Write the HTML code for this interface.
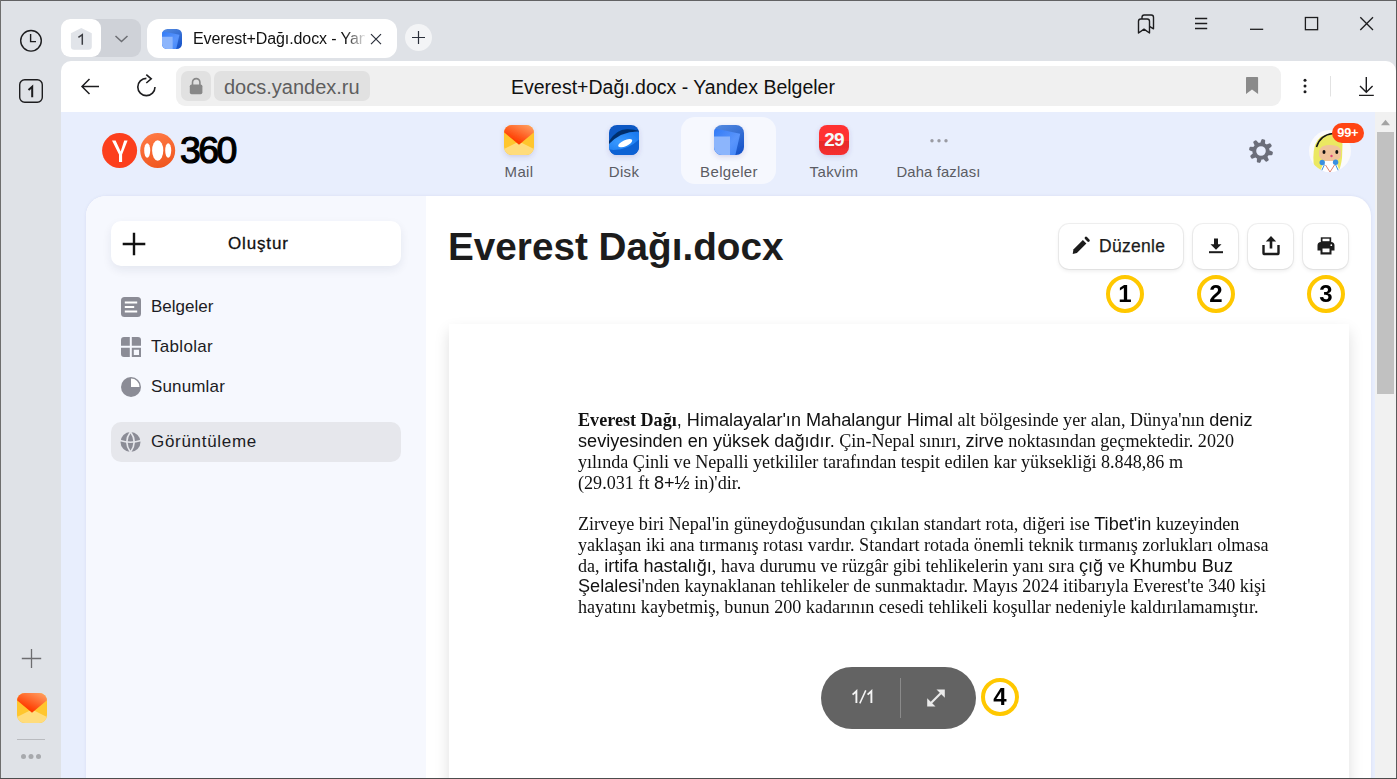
<!DOCTYPE html>
<html><head><meta charset="utf-8">
<style>
*{margin:0;padding:0;box-sizing:border-box}
html,body{width:1397px;height:779px;overflow:hidden;background:#dfe2e7;font-family:"Liberation Sans",sans-serif}
.a{position:absolute}
svg{position:absolute;overflow:visible}
.nw{white-space:nowrap}
</style></head><body>
<!-- left browser sidebar icons -->
<svg style="left:0;top:0" width="62" height="779">
  <circle cx="31" cy="40.8" r="10.3" fill="none" stroke="#1d1d1f" stroke-width="1.4"/>
  <path d="M30.6 34V41.6H36" fill="none" stroke="#1d1d1f" stroke-width="1.4"/>
  <rect x="19.7" y="79.7" width="22.6" height="22.6" rx="5" fill="none" stroke="#1d1d1f" stroke-width="1.4"/>
  <path d="M21.8 658.5H41.2M31.5 649V668" stroke="#6d6d70" stroke-width="1.3"/>
  <path d="M17 739.5H45" stroke="#b9bbbf" stroke-width="1"/>
  <circle cx="23.5" cy="756.5" r="2.5" fill="#a7a9ad"/><circle cx="31" cy="756.5" r="2.5" fill="#a7a9ad"/><circle cx="38.5" cy="756.5" r="2.5" fill="#a7a9ad"/>
</svg>
<svg style="left:0;top:0" width="62" height="120"><path d="M28.5 89.9L32.2 86.7V97.2" fill="none" stroke="#1d1d1f" stroke-width="2"/></svg>


<!-- tabs -->
<div class="a" style="left:61px;top:19px;width:80px;height:38px;border-radius:9px;background:#cfd2d8"></div>
<div class="a" style="left:61px;top:19px;width:40px;height:38px;border-radius:9px;background:#fff"></div>
<svg style="left:0;top:0" width="450" height="60">
  <path d="M81.3 28L91.8 33.2V46.5Q91.8 49.8 88.5 49.8H74.2Q70.9 49.8 70.9 46.5V33.2Z" fill="#e1e4e9"/>
  <path d="M115.5 36L121.5 41.5L127.5 36" fill="none" stroke="#6c6e73" stroke-width="1.5"/>
  <circle cx="418.5" cy="37.5" r="13.5" fill="#f3f4f6"/>
  <path d="M412 37.5H425M418.5 31V44" stroke="#2a2f3a" stroke-width="1.2"/>
</svg>
<svg style="left:0;top:0" width="100" height="60"><path d="M78.4 37.4L82.3 34.6V44.8" fill="none" stroke="#3b3d42" stroke-width="1.5"/></svg>
<div class="a" style="left:147px;top:19px;width:250px;height:39px;border-radius:12px;background:#fff"></div>
<svg style="left:162px;top:29px" width="20" height="20" viewBox="0 0 30 30">
  <defs>
    <linearGradient id="dbk" x1="0.3" y1="0" x2="0.9" y2="1"><stop offset="0" stop-color="#4f86de"/><stop offset="1" stop-color="#1350c8"/></linearGradient>
    <linearGradient id="dmid" x1="0" y1="0" x2="1" y2="1"><stop offset="0" stop-color="#2f78f5"/><stop offset="0.6" stop-color="#5a95fc"/><stop offset="1" stop-color="#3f84f7"/></linearGradient>
    <clipPath id="dcl"><rect width="30" height="30" rx="8"/></clipPath>
  </defs>
  <g clip-path="url(#dcl)">
    <rect width="30" height="30" fill="url(#dbk)"/>
    <path d="M-1 3L26.2 8.7L21.1 31H-1Z" fill="url(#dmid)"/>
    <path d="M-1 11.5H16V31H-1Z" fill="#8cb5fc"/>
  </g>
</svg>
<div class="a nw" style="left:193px;top:28px;width:172px;height:22px;font-size:16px;line-height:22px;color:#111;overflow:hidden;letter-spacing:-0.1px;-webkit-mask-image:linear-gradient(90deg,#000 0,#000 152px,transparent 174px)">Everest+Dağı.docx - Yandex Belgeler</div>

<svg style="left:0;top:0" width="450" height="60"><path d="M371 34.2L381 44.2M381 34.2L371 44.2" stroke="#2a2f3a" stroke-width="1.2"/></svg>
<!-- window controls -->
<svg style="left:0;top:0" width="1397" height="60">
  <path d="M1138.5 33V21.2Q1138.5 19 1140.7 19H1147.3Q1149.5 19 1149.5 21.2V33L1144 29.2L1138.5 33Z" fill="none" stroke="#1d1d1f" stroke-width="1.4" stroke-linejoin="round"/>
  <path d="M1142 19V17.2Q1142 15 1144.2 15H1151.3Q1153.5 15 1153.5 17.2V28.8L1149.5 26.3" fill="none" stroke="#1d1d1f" stroke-width="1.4" stroke-linejoin="round"/>
  <path d="M1195 18.5H1207.2M1195 23.5H1207.2M1195 28.5H1207.2" stroke="#1d1d1f" stroke-width="1.3"/>
  <path d="M1250 29.3H1263.2" stroke="#1d1d1f" stroke-width="1.3"/>
  <rect x="1305.4" y="17.5" width="12.2" height="12.2" fill="none" stroke="#1d1d1f" stroke-width="1.3"/>
  <path d="M1360.3 17.3L1373 30M1373 17.3L1360.3 30" stroke="#1d1d1f" stroke-width="1.3"/>
</svg>

<!-- toolbar -->
<div class="a" style="left:61px;top:61px;width:1335px;height:60px;border-radius:10px 10px 0 0;background:#fff"></div>
<svg style="left:0;top:60px" width="1397" height="52">
  <path d="M82.5 26.5H99M89.5 19L82 26.5L89.5 34" fill="none" stroke="#1d1d1f" stroke-width="1.5"/>
  <path d="M155 27A8.6 8.6 0 1 1 146.4 18.4" fill="none" stroke="#1d1d1f" stroke-width="1.6"/>
  <path d="M146.3 14.6L151.2 18.8L146.3 23" fill="none" stroke="#1d1d1f" stroke-width="1.6"/>
</svg>
<div class="a" style="left:176px;top:66px;width:1105px;height:40px;border-radius:9px;background:#f0f0f0"></div>
<div class="a" style="left:181px;top:71px;width:30px;height:30px;border-radius:7px;background:#e1e1e1"></div>
<div class="a" style="left:214px;top:71px;width:156px;height:30px;border-radius:7px;background:#e1e1e1"></div>
<svg style="left:0;top:60px" width="1397" height="52">
  <path d="M192.5 25V22.3A3.7 3.7 0 0 1 199.9 22.3V25" fill="none" stroke="#888" stroke-width="1.6"/>
  <rect x="189.8" y="24.5" width="12.6" height="9.8" rx="1.8" fill="#888"/>
  <path d="M1246 17.8Q1246 17 1246.8 17H1257.3Q1258.1 17 1258.1 17.8V34L1252 29.5L1246 34Z" fill="#8a8a8a"/>
  <circle cx="1305" cy="20.3" r="1.5" fill="#1d1d1f"/><circle cx="1305" cy="26" r="1.5" fill="#1d1d1f"/><circle cx="1305" cy="31.7" r="1.5" fill="#1d1d1f"/>
  <path d="M1330.5 16V36.5" stroke="#e2e2e2" stroke-width="1"/>
  <path d="M1366.3 17V32M1360 26L1366.3 32.3L1372.6 26M1359 35.4H1373.8" fill="none" stroke="#1d1d1f" stroke-width="1.4"/>
</svg>
<div class="a nw" style="left:224px;top:75px;font-size:20px;line-height:24px;color:#5e5e5e">docs.yandex.ru</div>
<div class="a nw" style="left:511px;top:75px;font-size:19.5px;line-height:24px;color:#111">Everest+Dağı.docx - Yandex Belgeler</div>


<!-- page -->
<div class="a" style="left:61px;top:112px;width:1314px;height:666px;background:#e8eefd"></div>
<!-- scrollbar -->
<div class="a" style="left:1375px;top:112px;width:21px;height:666px;background:#f1f1f1"></div>
<div class="a" style="left:1377px;top:132px;width:17px;height:262px;background:#c1c1c1"></div>
<svg style="left:0;top:0" width="1397" height="140"><path d="M1381 125.2L1385.5 119.8L1390 125.2Z" fill="#a3a3a3"/></svg>

<!-- 360 header -->
<svg style="left:102px;top:133px" width="75" height="36" viewBox="0 0 75 36">
  <defs><linearGradient id="og" x1="0.3" y1="0" x2="0.6" y2="1"><stop offset="0" stop-color="#ff7a45"/><stop offset="1" stop-color="#f0561e"/></linearGradient></defs>
  <circle cx="17.6" cy="17.5" r="17.5" fill="#fc3f1d"/>
  <path d="M10 7.6H13.6L18.7 18.4L22.2 7.6H25.6L20.1 21.6V29H17V21.6Z" fill="#fff"/>
  <circle cx="55.7" cy="17.5" r="17.5" fill="url(#og)"/>
  <ellipse cx="55.7" cy="17.5" rx="5.6" ry="10.2" fill="#fff"/>
  <ellipse cx="45.2" cy="17.5" rx="3" ry="7.3" fill="#fff"/>
  <ellipse cx="66.2" cy="17.5" rx="3" ry="7.3" fill="#fff"/>
</svg>
<div class="a nw" style="left:180px;top:127px;font-size:37.5px;font-weight:normal;line-height:46px;letter-spacing:-2.6px;color:#000;-webkit-text-stroke:1.2px #000">360</div>

<!-- services -->
<div class="a" style="left:681px;top:117px;width:95px;height:67px;border-radius:14px;background:#f6f8fe"></div>
<svg style="left:0;top:0" width="1397" height="200">
  <defs>
    <linearGradient id="mailtop" x1="0.3" y1="0.75" x2="0.85" y2="0"><stop offset="0" stop-color="#ff3c00"/><stop offset="1" stop-color="#ffa366"/></linearGradient>
    <linearGradient id="diskg" x1="0" y1="0" x2="0" y2="1"><stop offset="0" stop-color="#0a4fb8"/><stop offset="1" stop-color="#1f74e8"/></linearGradient>
    <linearGradient id="docg" x1="0" y1="0" x2="1" y2="1"><stop offset="0" stop-color="#3585f8"/><stop offset="1" stop-color="#1b58d4"/></linearGradient>
    <linearGradient id="calg" x1="0" y1="0" x2="0" y2="1"><stop offset="0" stop-color="#ff3333"/><stop offset="0.54" stop-color="#ff3131"/><stop offset="0.54" stop-color="#e62a2a"/><stop offset="0.74" stop-color="#ec2c2c"/><stop offset="1" stop-color="#f73030"/></linearGradient>
    <filter id="ish" x="-50%" y="-50%" width="200%" height="200%"><feDropShadow dx="0" dy="2" stdDeviation="2.5" flood-color="#4a3a8a" flood-opacity="0.18"/></filter>
  </defs>
  <g transform="translate(504,125)" filter="url(#ish)">
    <defs><clipPath id="mcl"><rect width="30" height="30" rx="8"/></clipPath></defs>
    <g clip-path="url(#mcl)">
    <rect width="30" height="30" fill="#ffc62e"/>
    <path d="M-1 24.5L15 16.5L31 24.5V31H-1Z" fill="#ffdc7c"/>
    <path d="M-1 6.5L15 19.8L31 6.5V-1H-1Z" fill="url(#mailtop)"/>
    </g>
  </g>
  <g transform="translate(609,125)" filter="url(#ish)">
    <defs><clipPath id="dkc"><rect width="30" height="30" rx="8"/></clipPath>
    <radialGradient id="dkb" cx="0.35" cy="0.55" r="0.7"><stop offset="0" stop-color="#3a9aff"/><stop offset="1" stop-color="#1a7af0"/></radialGradient></defs>
    <g clip-path="url(#dkc)">
    <rect width="30" height="30" fill="#0758c4"/>
    <path d="M-1 31V24Q14 27 31 13V31Z" fill="#0a62d4"/>
    <path d="M-1 18Q7 3.5 19 4.2Q25 4.6 31 6V12Q12 7 -1 21Z" fill="#022f6c"/>
    <path d="M-1 20Q12 5.5 31 6.5V13.5Q18 27 -1 24.5Z" fill="url(#dkb)"/>
    <ellipse cx="16.2" cy="18.2" rx="7.6" ry="3" transform="rotate(-24 16.2 18.2)" fill="#fff"/>
    </g>
  </g>
  <g transform="translate(714,125)" filter="url(#ish)">
    <g clip-path="url(#dcl)">
    <rect width="30" height="30" fill="url(#dbk)"/>
    <path d="M-1 3L26.2 8.7L21.1 31H-1Z" fill="url(#dmid)"/>
    <path d="M-1 11.5H16V31H-1Z" fill="#8cb5fc"/>
    </g>
  </g>
  <g transform="translate(819,125)" filter="url(#ish)">
    <rect width="30" height="30" rx="8" fill="url(#calg)"/>
  </g>
  <circle cx="932" cy="140.7" r="1.7" fill="#9a9ba3"/><circle cx="939" cy="140.7" r="1.7" fill="#9a9ba3"/><circle cx="946" cy="140.7" r="1.7" fill="#9a9ba3"/>
</svg>
<div class="a nw" style="left:819px;top:127.5px;width:30px;text-align:center;font-size:19px;font-weight:bold;line-height:24px;color:#f4fbfa;letter-spacing:-0.8px">29</div>
<div class="a nw" style="left:469px;top:161px;width:100px;text-align:center;font-size:15px;line-height:22px;color:#5b5c63;letter-spacing:0.35px">Mail</div>
<div class="a nw" style="left:574px;top:161px;width:100px;text-align:center;font-size:15px;line-height:22px;color:#5b5c63;letter-spacing:0.35px">Disk</div>
<div class="a nw" style="left:679px;top:161px;width:100px;text-align:center;font-size:15px;line-height:22px;color:#5b5c63;letter-spacing:0.35px">Belgeler</div>
<div class="a nw" style="left:784px;top:161px;width:100px;text-align:center;font-size:15px;line-height:22px;color:#5b5c63;letter-spacing:0.35px">Takvim</div>
<div class="a nw" style="left:878px;top:161px;width:121px;text-align:center;font-size:14.8px;line-height:22px;color:#5b5c63;letter-spacing:0.15px">Daha fazlası</div>

<!-- gear + avatar -->
<svg style="left:1248px;top:138px" width="26" height="26" viewBox="0 0 26 26"><path fill="#6b6e7a" stroke="#6b6e7a" stroke-width="2.4" stroke-linejoin="round" fill-rule="evenodd" d="M13.26 5.60L14.50 2.31L15.98 2.62L15.77 6.14A7.40 7.40 0 0 1 18.41 7.95L21.63 6.50L22.45 7.76L19.81 10.11A7.40 7.40 0 0 1 20.40 13.26L23.69 14.50L23.38 15.98L19.86 15.77A7.40 7.40 0 0 1 18.05 18.41L19.50 21.63L18.24 22.45L15.89 19.81A7.40 7.40 0 0 1 12.74 20.40L11.50 23.69L10.02 23.38L10.23 19.86A7.40 7.40 0 0 1 7.59 18.05L4.37 19.50L3.55 18.24L6.19 15.89A7.40 7.40 0 0 1 5.60 12.74L2.31 11.50L2.62 10.02L6.14 10.23A7.40 7.40 0 0 1 7.95 7.59L6.50 4.37L7.76 3.55L10.11 6.19A7.40 7.40 0 0 1 13.26 5.60ZM13.00 7.00a6 6 0 1 0 0 12a6 6 0 1 0 0-12Z"/></svg>
<svg style="left:1309px;top:130px" width="42" height="42" viewBox="0 0 42 42">
  <defs><clipPath id="avc"><circle cx="21" cy="21" r="21"/></clipPath></defs>
  <circle cx="21" cy="21" r="21" fill="#fafafc"/>
  <g clip-path="url(#avc)">
    <path d="M5.5 40Q3 26 6 15Q10 4 22 4Q32 5 33.5 14L33 28Q32 36 30 40Z" fill="#ebe862"/>
    <path d="M7.5 17Q11 5 24 3.5" fill="none" stroke="#151515" stroke-width="1.5"/>
    <path d="M10 21Q12 14 22 15Q31 15 32 21V26Q30 31.5 21 31.5Q12 31 10 26Z" fill="#f0c39a"/>
    <ellipse cx="15" cy="22" rx="1.5" ry="2" fill="#111"/><ellipse cx="27.8" cy="22" rx="1.5" ry="2" fill="#111"/>
    <circle cx="22.5" cy="26" r="1.2" fill="#e0457a"/>
    <path d="M14 31H27V35H14Z" fill="#fff"/>
    <path d="M11 42L14 34H28L31 42Z" fill="#fff"/>
    <path d="M16.5 35L21 42L25.5 35" fill="none" stroke="#d9735e" stroke-width="0.9"/>
    <path d="M12 42L15.5 34.5M30 42L26.5 34.5" stroke="#3a90e0" stroke-width="1"/>
    <circle cx="13.2" cy="32.5" r="2.7" fill="#3a90e0"/><circle cx="26.6" cy="32.2" r="2.7" fill="#3a90e0"/>
  </g>
</svg>
<div class="a nw" style="left:1332px;top:123px;width:31.5px;height:20px;border-radius:10px;background:#ff4514;color:#fff;font-weight:bold;font-size:12.8px;line-height:20px;text-align:center;letter-spacing:-0.3px">99+</div>

<!-- main card -->
<div class="a" style="left:86px;top:196px;width:1285px;height:600px;border-radius:20px;background:#fff;box-shadow:0 0 3px rgba(120,130,180,0.15)"></div>
<div class="a" style="left:86px;top:196px;width:340px;height:600px;border-radius:20px 0 0 0;background:#f6f8fe"></div>


<!-- sidebar mail icon -->
<svg style="left:17px;top:693px" width="30" height="30" viewBox="0 0 30 30">
  <defs><linearGradient id="mailtop2" x1="0.3" y1="0.75" x2="0.85" y2="0"><stop offset="0" stop-color="#ff3c00"/><stop offset="1" stop-color="#ffa366"/></linearGradient></defs>
  <defs><clipPath id="mcl2"><rect width="30" height="30" rx="8"/></clipPath></defs>
  <g clip-path="url(#mcl2)">
  <rect width="30" height="30" fill="#ffc62e"/>
  <path d="M-1 24.5L15 16.5L31 24.5V31H-1Z" fill="#ffdc7c"/>
  <path d="M-1 6.5L15 19.8L31 6.5V-1H-1Z" fill="url(#mailtop2)"/>
  </g>
</svg>

<!-- left panel -->
<div class="a" style="left:111px;top:221px;width:290px;height:45px;border-radius:10px;background:#fff;box-shadow:0 4px 10px rgba(30,40,80,0.08)"></div>
<svg style="left:0;top:0" width="430" height="470">
  <path d="M122.7 244H145.3M134 232.7V255.3" stroke="#111" stroke-width="2.4"/>
  <rect x="121" y="297" width="20" height="20" rx="3.5" fill="#8b8c96"/>
  <path d="M124.8 302.5H137.2M124.8 307H134.2M124.8 311.5H137.2" stroke="#fff" stroke-width="2"/>
  <path d="M121 340Q121 337 124 337H129.8V345.8H121Z M131.8 337H138Q141 337 141 340V345.8H131.8Z M121 347.8H129.8V357H124Q121 357 121 354Z" fill="#8b8c96"/>
  <path d="M132.8 348.8H140V356H132.8Z" fill="none" stroke="#8b8c96" stroke-width="2"/>
  <circle cx="131" cy="387" r="10" fill="#8b8c96"/>
  <path d="M131 378.5A8.5 8.5 0 0 1 139.5 387H131Z" fill="#fff"/>
</svg>
<div class="a nw" style="left:228px;top:233px;font-size:17px;line-height:22px;color:#111;letter-spacing:0.85px;-webkit-text-stroke:0.3px #111">Oluştur</div>
<div class="a nw" style="left:151px;top:296px;font-size:17px;line-height:22px;color:#1c1c24">Belgeler</div>
<div class="a nw" style="left:151px;top:336px;font-size:17px;line-height:22px;color:#1c1c24;letter-spacing:0.3px">Tablolar</div>
<div class="a nw" style="left:151px;top:376px;font-size:17px;line-height:22px;color:#1c1c24;letter-spacing:0.15px">Sunumlar</div>
<div class="a" style="left:111px;top:422px;width:290px;height:40px;border-radius:10px;background:#e6e7ec"></div>
<svg style="left:120px;top:432px" width="21" height="20" viewBox="0 0 20 20">
  <circle cx="10" cy="10" r="10" fill="#8b8c96"/>
  <path d="M-0.5 8.6Q10 11.8 20.5 8.6" fill="none" stroke="#e6e7ec" stroke-width="1.6"/>
  <path d="M10 -0.2Q2.6 10 10 20.2M10 -0.2Q17.4 10 10 20.2" fill="none" stroke="#e6e7ec" stroke-width="1.6"/>
</svg>
<div class="a nw" style="left:151px;top:431px;font-size:17px;line-height:22px;color:#1c1c24;letter-spacing:0.7px">Görüntüleme</div>

<!-- title -->
<div class="a nw" style="left:448px;top:224px;font-size:38.7px;font-weight:bold;line-height:46px;color:#1c1c1c">Everest Dağı.docx</div>

<!-- action buttons -->
<div class="a" style="left:1059px;top:224px;width:123.5px;height:45px;border-radius:10px;background:#fff;box-shadow:0 0 0 1px rgba(0,0,0,0.06),0 2px 4px rgba(0,0,0,0.08)"></div>
<div class="a" style="left:1193px;top:224px;width:45px;height:45px;border-radius:10px;background:#fff;box-shadow:0 0 0 1px rgba(0,0,0,0.06),0 2px 4px rgba(0,0,0,0.08)"></div>
<div class="a" style="left:1248px;top:224px;width:45px;height:45px;border-radius:10px;background:#fff;box-shadow:0 0 0 1px rgba(0,0,0,0.06),0 2px 4px rgba(0,0,0,0.08)"></div>
<div class="a" style="left:1303px;top:224px;width:45px;height:45px;border-radius:10px;background:#fff;box-shadow:0 0 0 1px rgba(0,0,0,0.06),0 2px 4px rgba(0,0,0,0.08)"></div>
<svg style="left:0;top:0" width="1397" height="330">
  <path d="M1072.7 254L1073.4 249.6L1082.9 240.1L1086.4 243.6L1076.9 253.1Z" fill="#1c1c1c"/><path d="M1086 238L1088.4 240.4" stroke="#1c1c1c" stroke-width="2.8" stroke-linecap="round"/>
  <path d="M1214 238.6H1218V244.2H1221.5L1216 249.8L1210.5 244.2H1214Z" fill="#1c1c1c"/>
  <path d="M1209 252.2H1223" stroke="#1c1c1c" stroke-width="2"/>
  <path d="M1271 236L1276.2 241.5H1272.3V248.5H1269.7V241.5H1265.8Z" fill="#1c1c1c"/>
  <path d="M1263.5 245V253.3Q1263.5 254 1264.2 254H1277.8Q1278.5 254 1278.5 253.3V245" fill="none" stroke="#1c1c1c" stroke-width="2.4"/>
  <path d="M1320.8 242.5V237.3H1331.2V242.5Z" fill="#1c1c1c"/>
  <path d="M1317.5 245.5Q1317.5 242 1321 242H1331Q1334.5 242 1334.5 245.5V250.5H1331.5V254.4H1320.5V250.5H1317.5Z" fill="#1c1c1c"/>
  <path d="M1322.5 248.5H1329.5V252.3H1322.5Z" fill="#fff"/>
  <rect x="1322.5" y="238.7" width="7" height="2.5" fill="#fff"/>
  <circle cx="1331.3" cy="245.2" r="0.9" fill="#fff"/>
</svg>
<div class="a nw" style="left:1099px;top:235px;font-size:17.5px;line-height:22px;color:#1c1c1c;letter-spacing:0.3px;-webkit-text-stroke:0.25px #1c1c1c">Düzenle</div>

<!-- document page -->
<div class="a" style="left:449px;top:324px;width:900px;height:470px;background:#fff;box-shadow:0 7px 14px rgba(0,0,0,0.13)"></div>


<!-- doc text -->
<style>.dl{position:absolute;will-change:transform;left:578px;white-space:nowrap;font-family:"Liberation Serif",serif;font-size:18.13px;line-height:22px;height:22px;color:#111}.ss{font-family:"Liberation Sans",sans-serif;font-size:18.13px}</style>
<div class="dl" id="l0" style="top:408.93px"><b>Everest Dağı</b><span class="ss">, Himalayalar'ın Mahalangur Himal</span> alt bölgesinde yer alan, Dünya'nın <span class="ss">deniz</span></div>
<div class="dl" id="l1" style="top:429.93px"><span class="ss">seviyesinden en yüksek dağıdır.</span> Çin-Nepal sınırı, <span class="ss">zirve</span> noktasından geçmektedir. 2020</div>
<div class="dl" id="l2" style="top:450.93px">yılında Çinli ve Nepalli yetkililer tarafından tespit edilen kar yüksekliği 8.848,86 m</div>
<div class="dl" id="l3" style="top:472.43px">(29.031 ft <span class="ss">8+½</span> in)'dir.</div>
<div class="dl" id="l4" style="top:512.73px">Zirveye biri Nepal'in güneydoğusundan çıkılan standart rota, diğeri ise <span class="ss">Tibet'in</span> kuzeyinden</div>
<div class="dl" id="l5" style="top:533.63px">yaklaşan iki ana tırmanış rotası vardır. Standart rotada önemli teknik tırmanış zorlukları olmasa</div>
<div class="dl" id="l6" style="top:554.53px">da, <span class="ss">irtifa hastalığı</span>, hava durumu ve rüzgâr gibi tehlikelerin yanı sıra <span class="ss">çığ</span> ve <span class="ss">Khumbu Buz</span></div>
<div class="dl" id="l7" style="top:575.43px"><span class="ss">Şelalesi</span>'nden kaynaklanan tehlikeler de sunmaktadır. Mayıs 2024 itibarıyla Everest'te 340 kişi</div>
<div class="dl" id="l8" style="top:596.33px">hayatını kaybetmiş, bunun 200 kadarının cesedi tehlikeli koşullar nedeniyle kaldırılamamıştır.</div>

<!-- pager -->
<div class="a" style="left:821px;top:667px;width:155px;height:62px;border-radius:31px;background:#636363"></div>
<div class="a" style="left:900px;top:678px;width:1px;height:40px;background:#8a8a8a"></div>
<svg style="left:0;top:0" width="1397" height="779">
  <path d="M852.6 694.6L856.4 691.2V703M867.6 694.6L871.4 691.2V703" fill="none" stroke="#f4f4f4" stroke-width="1.9" stroke-linejoin="miter"/>
  <path d="M859.8 703.4L865.8 690.4" stroke="#f4f4f4" stroke-width="1.5"/>
</svg>
<svg style="left:0;top:640px" width="1397" height="100">
  <path d="M929.5 64.5L942.5 51.5" stroke="#eaeaea" stroke-width="2.2"/>
  <path d="M936.5 49.5H944.8V57.8Z M935.5 66.5H927.2V58.2Z" fill="#eaeaea"/>
</svg>

<!-- annotation circles -->
<style>.ann{position:absolute;width:38px;height:38px;border-radius:50%;border:4.5px solid #ffc800;background:#fff;font-weight:bold;font-size:24px;line-height:29px;text-align:center;color:#000}</style>
<div class="ann" style="left:1106px;top:275px">1</div>
<div class="ann" style="left:1197px;top:275px">2</div>
<div class="ann" style="left:1307px;top:275px">3</div>
<div class="ann" style="left:981px;top:678px">4</div>

<!-- window borders -->
<div class="a" style="left:0;top:0;width:1397px;height:1px;background:#626264"></div>
<div class="a" style="left:0;top:0;width:1px;height:779px;background:#6e6e6e"></div>
<div class="a" style="left:1396px;top:0;width:1px;height:779px;background:#5a5a5a"></div>
<div class="a" style="left:0;top:778px;width:1397px;height:1px;background:#4d4d4d"></div>

</body></html>
